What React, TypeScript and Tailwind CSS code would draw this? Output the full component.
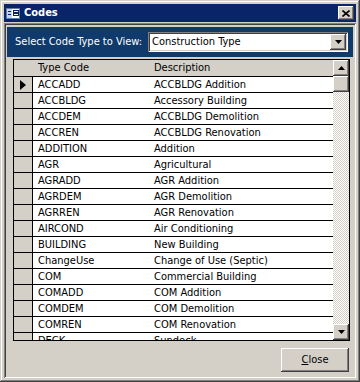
const raised =
  'shadow-[inset_-1px_-1px_#404040,inset_1px_1px_#ffffff,inset_-2px_-2px_#808080,inset_2px_2px_#d4d0c8]';
const sunken =
  'shadow-[inset_1px_1px_#808080,inset_-1px_-1px_#ffffff,inset_2px_2px_#404040,inset_-2px_-2px_#d4d0c8]';

const rows = [
  ['ACCADD', 'ACCBLDG Addition'],
  ['ACCBLDG', 'Accessory Building'],
  ['ACCDEM', 'ACCBLDG Demolition'],
  ['ACCREN', 'ACCBLDG Renovation'],
  ['ADDITION', 'Addition'],
  ['AGR', 'Agricultural'],
  ['AGRADD', 'AGR Addition'],
  ['AGRDEM', 'AGR Demolition'],
  ['AGRREN', 'AGR Renovation'],
  ['AIRCOND', 'Air Conditioning'],
  ['BUILDING', 'New Building'],
  ['ChangeUse', 'Change of Use (Septic)'],
  ['COM', 'Commercial Building'],
  ['COMADD', 'COM Addition'],
  ['COMDEM', 'COM Demolition'],
  ['COMREN', 'COM Renovation'],
  ['DECK', 'Sundeck'],
];

function Arrow({ dir }: { dir: 'up' | 'down' }) {
  return (
    <svg width="7" height="4" viewBox="0 0 7 4">
      {dir === 'up' ? <path d="M3.5 0L7 4H0z" fill="#000" /> : <path d="M0 0h7L3.5 4z" fill="#000" />}
    </svg>
  );
}

function ScrollButton({ dir }: { dir: 'up' | 'down' }) {
  return (
    <div className={`h-[16px] w-[16px] shrink-0 bg-[#d4d0c8] ${raised} flex items-center justify-center`}>
      <Arrow dir={dir} />
    </div>
  );
}

export default function App() {
  return (
    <div
      className={`w-[360px] h-[382px] bg-[#d4d0c8] p-[4px] flex flex-col text-[11px] text-black font-['DejaVu_Sans_Condensed','DejaVu_Sans',sans-serif] shadow-[inset_-1px_-1px_#404040,inset_1px_1px_#d4d0c8,inset_-2px_-2px_#808080,inset_2px_2px_#ffffff]`}
    >
      {/* Title bar */}
      <div className="h-[18px] shrink-0 bg-[#0a246a] flex items-center pl-[1px] pr-[2px]">
        <svg width="16" height="16" viewBox="0 0 16 16">
          <rect x="1.5" y="3.5" width="13" height="10" fill="#ffffff" stroke="#5a7aa8" />
          <rect x="2" y="4" width="5" height="9" fill="#c8d4e4" />
          <path d="M3 6.5h3M3 9.5h3" stroke="#0a246a" />
          <rect x="8.5" y="5.5" width="5" height="2" fill="#fff" stroke="#0a246a" />
          <rect x="8.5" y="8.5" width="5" height="2" fill="#fff" stroke="#0a246a" />
        </svg>
        <span className="ml-[3px] font-bold text-white">Codes</span>
        <div className="flex-1" />
        <div className={`w-[16px] h-[14px] bg-[#d4d0c8] ${raised} flex items-center justify-center`}>
          <svg width="8" height="7" viewBox="0 0 8 7">
            <path d="M0.5 0.5l7 6M7.5 0.5l-7 6" stroke="#000" strokeWidth="1.6" />
          </svg>
        </div>
      </div>

      {/* Form body */}
      <div className={`mt-[1px] flex-1 flex flex-col p-[2px] ${sunken}`}>
        <div className="mx-[1px] mt-[2px] h-[30px] shrink-0 bg-[#0f3a6b] flex items-center pl-[8px] pr-[5px]">
          <span className="text-white">Select Code Type to View:</span>
          <div className={`ml-auto w-[200px] h-[20px] bg-white ${sunken} flex items-center pl-[4px] pr-[2px]`}>
            <span>Construction Type</span>
            <div className="ml-auto">
              <ScrollButton dir="down" />
            </div>
          </div>
        </div>

        {/* Datasheet */}
        <div className="ml-[7px] mt-[2px] w-[337px] h-[282px] shrink-0 border border-black flex overflow-hidden">
          <div className="flex-1 flex flex-col overflow-hidden bg-white">
            <div className="h-[17px] shrink-0 bg-[#d4d0c8] border-b border-black flex items-center">
              <div className="w-[19px]" />
              <div className="w-[116px] pl-[5px]">Type Code</div>
              <div className="pl-[5px]">Description</div>
            </div>
            {rows.map(([code, desc], i) => (
              <div key={code} className="h-[16px] shrink-0 border-b border-black flex items-center">
                <div className="w-[19px] h-full bg-[#d4d0c8] border-r border-black flex items-center justify-center">
                  {i === 0 && (
                    <svg width="6" height="10" viewBox="0 0 6 10">
                      <path d="M0 0L6 5L0 10z" fill="#000" />
                    </svg>
                  )}
                </div>
                <div className="w-[116px] pl-[5px] leading-[15px]">{code}</div>
                <div className="pl-[5px] leading-[15px]">{desc}</div>
              </div>
            ))}
          </div>
          <div className="w-[16px] shrink-0 flex flex-col">
            <ScrollButton dir="up" />
            <div className={`h-[16px] shrink-0 bg-[#d4d0c8] ${raised}`} />
            <div className="flex-1 bg-[repeating-conic-gradient(#d4d0c8_0_25%,#ffffff_0_50%)] bg-[length:2px_2px]" />
            <ScrollButton dir="down" />
          </div>
        </div>

        <div className="flex justify-end mt-[7px] mr-[5px]">
          <button className={`w-[68px] h-[24px] bg-[#d4d0c8] ${raised} flex items-center justify-center`}>
            <span>
              <span className="underline">C</span>lose
            </span>
          </button>
        </div>
      </div>
    </div>
  );
}
